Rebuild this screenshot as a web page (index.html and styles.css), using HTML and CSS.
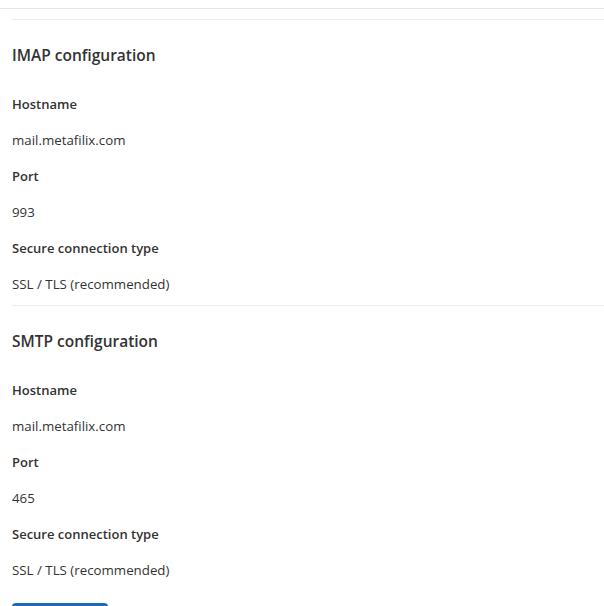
FILE: index.html
```html
<!DOCTYPE html>
<html>
<head>
<meta charset="utf-8">
<link rel="stylesheet" href="styles.css">
</head>
<body>
<div class="topbar"></div>
<div class="panel">
  <section class="config">
    <h2 class="config-title">IMAP configuration</h2>
    <div class="field-label">Hostname</div>
    <div class="field-value">mail.metafilix.com</div>
    <div class="field-label">Port</div>
    <div class="field-value">993</div>
    <div class="field-label">Secure connection type</div>
    <div class="field-value">SSL / TLS (recommended)</div>
  </section>
  <section class="config">
    <h2 class="config-title">SMTP configuration</h2>
    <div class="field-label">Hostname</div>
    <div class="field-value">mail.metafilix.com</div>
    <div class="field-label">Port</div>
    <div class="field-value">465</div>
    <div class="field-label">Secure connection type</div>
    <div class="field-value">SSL / TLS (recommended)</div>
  </section>
  <button class="primary-btn">Continue</button>
</div>
</body>
</html>
```

FILE: styles.css
```css
html, body {
  margin: 0;
  padding: 0;
  background: #ffffff;
  font-family: "Open Sans", "Noto Sans", sans-serif;
  color: #333333;
}
body {
  overflow: hidden;
}
.topbar {
  height: 8px;
  border-bottom: 1px solid #e6e6e6;
}
.panel {
  margin-top: 10px;
  padding-left: 12px;
}
.config {
  border-top: 1px solid #eeeeee;
  padding-top: 23px;
  padding-bottom: 3px;
}
.config-title {
  margin: 0 0 19px 0;
  font-size: 15.5px;
  line-height: 24px;
  font-weight: 600;
  color: #333333;
}
.field-label {
  font-size: 13px;
  line-height: 36px;
  font-weight: 600;
  color: #333333;
}
.field-value {
  font-size: 13.3px;
  line-height: 36px;
  color: #333333;
}
.primary-btn {
  display: block;
  margin-top: 12px;
  width: 96px;
  height: 40px;
  border: none;
  border-radius: 4px;
  background: #1a6bb5;
  color: #ffffff;
  font-family: inherit;
  font-size: 13px;
}
```
